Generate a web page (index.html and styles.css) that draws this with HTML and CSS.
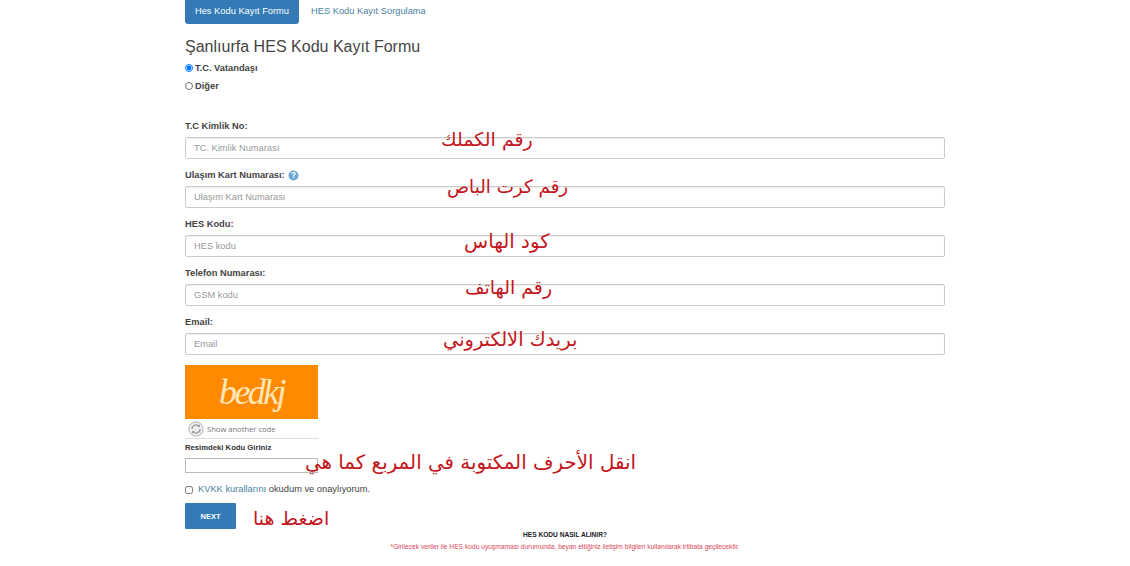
FILE: index.html
```html
<!DOCTYPE html>
<html lang="tr">
<head>
<meta charset="utf-8">
<title>HES Kodu Kayıt Formu</title>
<link rel="stylesheet" href="styles.css">
</head>
<body>
<main class="page">
  <nav class="tabs">
    <a class="tab active">Hes Kodu Kayıt Formu</a>
    <a class="tab">HES Kodu Kayıt Sorgulama</a>
  </nav>
  <h1 class="title">Şanlıurfa HES Kodu Kayıt Formu</h1>
  <div class="radios">
    <label class="radio"><input type="radio" name="t" checked>T.C. Vatandaşı</label>
    <label class="radio"><input type="radio" name="t">Diğer</label>
  </div>
  <div class="fields">
    <div class="field">
      <label class="label">T.C Kimlik No:</label>
      <input class="control" placeholder="TC. Kimlik Numarası">
      <span class="note note-id" dir="rtl">رقم الكملك</span>
    </div>
    <div class="field">
      <label class="label">Ulaşım Kart Numarası:
        <svg class="help" viewBox="0 0 12 12" aria-hidden="true"><circle cx="6" cy="6" r="5.5" fill="#6fa8d6"/><text x="6" y="9" text-anchor="middle" class="help-q">?</text></svg>
      </label>
      <input class="control" placeholder="Ulaşım Kart Numarası">
      <span class="note note-card" dir="rtl">رقم كرت الباص</span>
    </div>
    <div class="field">
      <label class="label">HES Kodu:</label>
      <input class="control" placeholder="HES kodu">
      <span class="note note-hes" dir="rtl">كود الهاس</span>
    </div>
    <div class="field">
      <label class="label">Telefon Numarası:</label>
      <input class="control" placeholder="GSM kodu">
      <span class="note note-phone" dir="rtl">رقم الهاتف</span>
    </div>
    <div class="field">
      <label class="label">Email:</label>
      <input class="control" placeholder="Email">
      <span class="note note-mail" dir="rtl">بريدك الالكتروني</span>
    </div>
  </div>
  <div class="captcha">
    <div class="captcha-img"><span class="captcha-word">bedkj</span></div>
    <div class="captcha-refresh">
      <svg class="refresh" viewBox="0 0 18 18" aria-hidden="true">
        <circle cx="9" cy="9" r="8" fill="#eee" stroke="#aaa"/>
        <path d="M4.5 9a4.5 4.5 0 0 1 7.7-3.2M13.5 9a4.5 4.5 0 0 1-7.7 3.2" fill="none" stroke="#999" stroke-width="1.4"/>
        <path d="M13.4 3.6v3.2h-3.2zM4.6 14.4v-3.2h3.2z" fill="#999"/>
      </svg>
      <span>Show another code</span>
    </div>
    <label class="captcha-label">Resimdeki Kodu Giriniz</label>
    <div class="captcha-entry">
      <input class="captcha-input">
      <span class="note note-captcha" dir="rtl">انقل الأحرف المكتوبة في المربع كما هي</span>
    </div>
  </div>
  <label class="consent"><input type="checkbox"><span><a class="link">KVKK kurallarını</a> okudum ve onaylıyorum.</span></label>
  <div class="submit-row">
    <button class="next" type="button">NEXT</button>
    <span class="note note-next" dir="rtl">اضغط هنا</span>
  </div>
  <p class="how">HES KODU NASIL ALINIR?</p>
  <p class="warn">*Girilecek veriler ile HES kodu uyuşmaması durumunda, beyan ettiğiniz iletişim bilgileri kullanılarak irtibata geçilecektir.</p>
</main>
</body>
</html>
```
FILE: styles.css
```css
* { box-sizing: border-box; }
html, body { margin: 0; padding: 0; background: #fff; }
body { font-family: "Liberation Sans", Arial, sans-serif; color: #333; height: 566px; overflow: hidden; }
.page { width: 760px; margin-left: 185px; position: relative; }

.tabs { display: flex; align-items: flex-start; height: 24px; gap: 12px; }
.tab { font-size: 9.3px; line-height: 23px; color: #4a7f9c; white-space: nowrap; }
.tab.active { background: #337ab7; color: #fff; height: 24px; width: 114px; text-align: center; border-radius: 0 0 3px 3px; }

.title { margin: 13px 0 0; font-size: 16.05px; line-height: 18px; font-weight: 400; color: #444; }

.radios { display: flex; flex-direction: column; margin-top: 4px; }
.radio { display: flex; align-items: center; height: 18px; font-size: 9.3px; font-weight: 700; color: #444; }
.radio input { margin: 0 2px 0 0; width: 8px; height: 8px; }

.fields { margin-top: 24px; display: flex; flex-direction: column; gap: 9px; }
.field { position: relative; }
.label { display: flex; align-items: center; gap: 3px; height: 13px; padding-top: 1px; margin-bottom: 5px; font-size: 9.3px; font-weight: 700; color: #444; }
.help { width: 11px; height: 11px; }
.help-q { font-size: 9px; font-weight: 700; fill: #fff; }
.control { display: block; width: 100%; height: 22px; border: 1px solid #ccc; border-radius: 2px; padding: 0 8px; font: 9.3px "Liberation Sans", Arial, sans-serif; background: #fff; box-shadow: inset 0 1px 1px rgba(0,0,0,.07); }
.control::placeholder { color: #999; opacity: 1; }

.note { position: absolute; font-family: "DejaVu Sans", sans-serif; line-height: 24px; color: #c4161c; white-space: nowrap; }
.note-id { left: 256px; top: 8px; font-size: 19px; }
.note-card { left: 262px; top: 7px; font-size: 18.3px; }
.note-hes { left: 279px; top: 13px; font-size: 19.8px; }
.note-phone { left: 280px; top: 9px; font-size: 18.9px; }
.note-mail { left: 258px; top: 13px; font-size: 19.4px; }
.note-captcha { left: 120px; top: -7px; font-size: 19.85px; }
.note-next { left: 68px; top: 3px; font-size: 19px; }

.captcha { margin-top: 10px; width: 133px; }
.captcha-img { height: 54px; background: #ff8a00; display: flex; align-items: center; justify-content: center; }
.captcha-word { font-family: "Liberation Serif", serif; font-style: italic; font-size: 36px; letter-spacing: -2.6px; color: #fde6b8; }
.captcha-refresh { display: flex; align-items: center; gap: 3px; height: 20px; padding-left: 3px; border-bottom: 1px solid #ddd; font-size: 7.6px; color: #777; font-family: "Open Sans", sans-serif; }
.refresh { width: 16px; height: 16px; }
.captcha-label { display: block; margin-top: 3px; height: 11px; font-size: 7.7px; line-height: 11px; font-weight: 700; color: #333; white-space: nowrap; }
.captcha-entry { position: relative; margin-top: 5px; }
.captcha-input { display: block; width: 133px; height: 15px; border: 1px solid #bbb; background: #fff; padding: 0; }

.consent { display: flex; align-items: center; gap: 5px; margin-top: 9px; height: 14px; font-size: 9.3px; color: #444; }
.consent input { margin: 2px 0 0; width: 8px; height: 8px; }
.link { color: #4a7f9c; }

.submit-row { position: relative; margin-top: 7px; height: 26px; }
.next { width: 51px; height: 26px; border: 0; border-radius: 1px; background: #337ab7; color: #fff; font: 700 7.5px "Liberation Sans", Arial, sans-serif; padding: 0; }

.how { margin: 2px 0 0; font-size: 6.6px; line-height: 8px; font-weight: 700; color: #222; text-align: center; }
.warn { margin: 4px 0 0; font-size: 6.67px; line-height: 8px; color: #d8485a; text-align: center; white-space: nowrap; }
```
